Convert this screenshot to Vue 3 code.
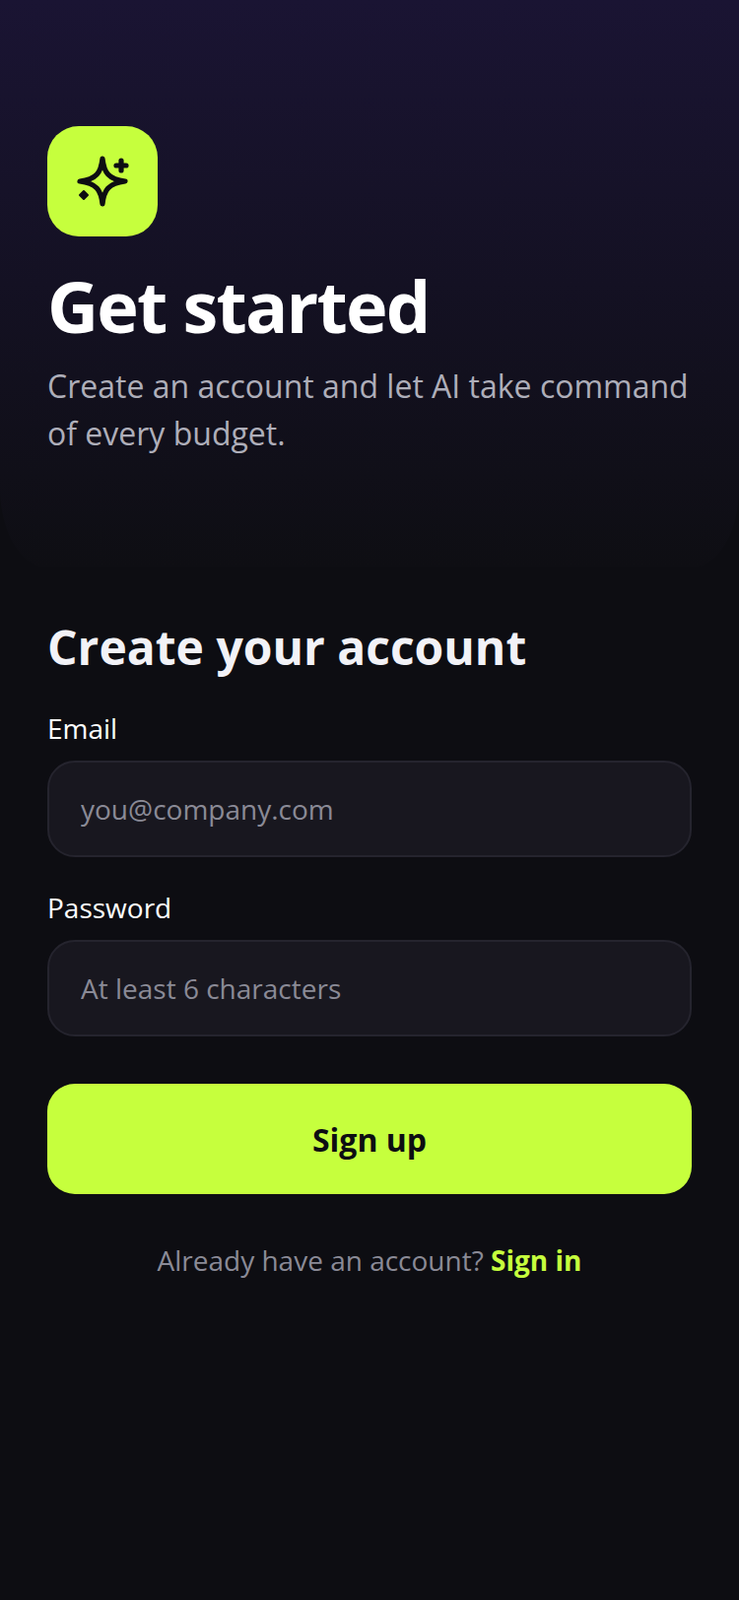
<script setup>
import { ref } from 'vue'
const email = ref('')
const password = ref('')
</script>

<template>
  <div class="page">
    <header class="hero">
      <div class="logo">
        <svg width="60" height="60" viewBox="26 26 60 60" fill="none" stroke="#0d0d12" stroke-width="5.200" stroke-linecap="round" stroke-linejoin="round">
          <path d="M56 33 C57.500 47 62 54 79 56 C62 58 57.500 65 56 79 C54.500 65 50 58 33 56 C50 54 54.500 47 56 33 Z" />
          <path d="M75 35 V45 M70 40 H80" />
          <path d="M37 66 L41 70 L37 74 L33 70 Z" fill="#0d0d12" stroke-width="2" />
        </svg>
      </div>
      <h1>Get started</h1>
      <p>Create an account and let AI take command of every budget.</p>
    </header>

    <form class="form" @submit.prevent>
      <h2>Create your account</h2>
      <label class="field">
        <span>Email</span>
        <input v-model="email" type="email" placeholder="you@company.com" />
      </label>
      <label class="field">
        <span>Password</span>
        <input v-model="password" type="password" placeholder="At least 6 characters" />
      </label>
      <button type="submit">Sign up</button>
      <div class="switch">Already have an account? <a href="#">Sign in</a></div>
    </form>
  </div>
</template>

<style>
html, body {
  margin: 0;
  background: #0d0d12;
}
</style>

<style scoped>
.page {
  min-height: 1624px;
  background: #0d0d12;
  font-family: "Open Sans", sans-serif;
  color: #fff;
}
.hero {
  height: 576px;
  padding: 128px 48px 0;
  box-sizing: border-box;
  background: linear-gradient(180deg, #1a1433 0%, #0e0e13 100%);
  border-radius: 0 0 48px 48px / 0 0 80px 80px;
}
.logo {
  width: 112px;
  height: 112px;
  border-radius: 32px;
  background: #c6ff3d;
  display: flex;
  align-items: center;
  justify-content: center;
}
h1 {
  margin: 26px 0 0;
  font-size: 72px;
  line-height: 88px;
  font-weight: 700;
  letter-spacing: -1.800px;
}
.hero p {
  margin: 14px 0 0;
  font-size: 32px;
  line-height: 48px;
  color: #aeaeb9;
}
.form {
  padding: 48px 48px 0;
  display: flex;
  flex-direction: column;
}
h2 {
  margin: 0;
  font-size: 48px;
  line-height: 66px;
  font-weight: 700;
  color: #f2f2f7;
}
.field {
  display: flex;
  flex-direction: column;
  margin-top: 29px;
}
.field + .field {
  margin-top: 31px;
}
.field span {
  font-size: 28px;
  line-height: 40px;
  margin-bottom: 13px;
}
input {
  height: 98px;
  box-sizing: border-box;
  padding: 0 32px;
  border: 2px solid #25242e;
  border-radius: 28px;
  background: #18171f;
  color: #fff;
  font: 28px "Open Sans", sans-serif;
  outline: none;
}
input::placeholder {
  color: #8a8a96;
  opacity: 1;
}
button {
  height: 112px;
  margin-top: 48px;
  border: 0;
  border-radius: 28px;
  background: #c6ff3d;
  color: #0d0d12;
  font: 700 32px "Open Sans", sans-serif;
}
.switch {
  margin-top: 47px;
  text-align: center;
  font-size: 28px;
  line-height: 40px;
  color: #8a8a96;
}
.switch a {
  color: #c6ff3d;
  font-weight: 700;
  text-decoration: none;
}
</style>
